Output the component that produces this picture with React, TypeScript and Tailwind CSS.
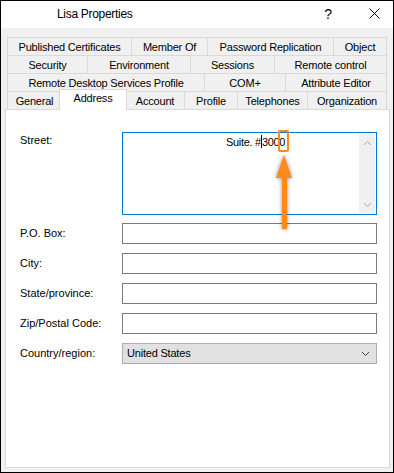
import React from 'react';

type Tab = { label: string; w: number; active?: boolean };

const rows: Tab[][] = [
  [
    { label: 'Published Certificates', w: 124 },
    { label: 'Member Of', w: 76 },
    { label: 'Password Replication', w: 126 },
    { label: 'Object', w: 54 },
  ],
  [
    { label: 'Security', w: 80 },
    { label: 'Environment', w: 103 },
    { label: 'Sessions', w: 84 },
    { label: 'Remote control', w: 113 },
  ],
  [
    { label: 'Remote Desktop Services Profile', w: 197 },
    { label: 'COM+', w: 81 },
    { label: 'Attribute Editor', w: 102 },
  ],
  [
    { label: 'General', w: 54 },
    { label: 'Address', w: 64, active: true },
    { label: 'Account', w: 59 },
    { label: 'Profile', w: 53 },
    { label: 'Telephones', w: 70 },
    { label: 'Organization', w: 80 },
  ],
];

function TabRow({ tabs }: { tabs: Tab[] }) {
  return (
    <div className="flex h-[18px] mx-[2px]">
      {tabs.map((t, i) =>
        t.active ? (
          <div
            key={t.label}
            style={{ width: t.w + 4 }}
            className="relative z-10 -mx-[2px] -mt-[2px] h-[21px] shrink-0 bg-white border-t border-x border-[#d9d9d9] flex justify-center pt-[1px] leading-[14px] tracking-[-0.2px]"
          >
            {t.label}
          </div>
        ) : (
          <div
            key={t.label}
            style={{ width: t.w }}
            className={`shrink-0 border-t border-l border-[#d9d9d9] flex items-center justify-center leading-[14px] tracking-[-0.2px] ${
              i === tabs.length - 1 ? 'border-r' : ''
            }`}
          >
            {t.label}
          </div>
        )
      )}
    </div>
  );
}

function Field({ label, children }: { label: string; children?: React.ReactNode }) {
  return (
    <div className="flex items-center">
      <div className="w-[102px] leading-[13px]">{label}</div>
      {children ?? <div className="w-[255px] h-[21px] border border-[#7a7a7a] bg-white" />}
    </div>
  );
}

function Chevron({ up }: { up?: boolean }) {
  return (
    <svg width="9" height="6" viewBox="0 0 9 6" className="text-[#a6a6a6]">
      <path
        d={up ? 'M1 5 L4.5 1.5 L8 5' : 'M1 1 L4.5 4.5 L8 1'}
        fill="none"
        stroke="currentColor"
        strokeWidth="1"
      />
    </svg>
  );
}

export default function App() {
  return (
    <div className="w-[394px] h-[473px] border border-black bg-[#f0f0f0] flex flex-col text-[11px] text-black font-['Liberation_Sans',Arial,sans-serif]">
      {/* Title bar */}
      <div className="h-[27px] bg-white flex items-center shrink-0">
        <span className="pl-[56px] text-[12px] tracking-[-0.3px] leading-[14px] mb-[1px]">Lisa Properties</span>
        <span className="ml-auto text-[14px] leading-[14px] mb-[2px]">?</span>
        <svg width="11" height="11" viewBox="0 0 11 11" className="ml-[37px] mr-[13px] mb-[2px]">
          <path d="M0.5 0.5 L10.5 10.5 M10.5 0.5 L0.5 10.5" stroke="#000" strokeWidth="1" />
        </svg>
      </div>

      <div className="flex-1 flex flex-col pt-[9px] pl-[4px] pr-[3px] pb-[4px]">
        {/* Tab rows */}
        {rows.map((r, i) => (
          <TabRow key={i} tabs={r} />
        ))}

        {/* Page */}
        <div className="flex-1 bg-white border border-[#d9d9d9] pt-[22px] pl-[14px] flex flex-col">
          <div className="flex">
            <div className="w-[102px] pt-[2px] leading-[13px]">Street:</div>
            <div className="relative w-[255px] h-[83px] border border-[#0078d7] bg-white flex">
              <div className="flex-1 pl-[103px] pt-[2px] leading-[14px] whitespace-pre tracking-[-0.3px]">
                Suite. #<span className="inline-block w-px h-[13px] bg-black align-[-2px]" />3000
              </div>
              <div className="w-[16px] my-[1px] mr-[1px] bg-[#f0f0f0] flex flex-col justify-between">
                <div className="h-[17px] flex items-center justify-center">
                  <Chevron up />
                </div>
                <div className="h-[17px] flex items-center justify-center">
                  <Chevron />
                </div>
              </div>

              {/* annotation */}
              <div className="absolute left-[155px] -top-[3px] w-[11px] h-[22px] border-2 border-[#ff8a1c] rounded-[2px]" />
              <svg
                width="35"
                height="85"
                viewBox="0 0 35 85"
                className="absolute left-[147px] top-[19px] drop-shadow-[0_0_2px_rgba(0,0,0,0.45)]"
              >
                <path d="M14 3 L6 26 L22 26 Z" fill="#ff8a1c" />
                <rect x="12" y="25" width="5" height="52" fill="#ff8a1c" />
              </svg>
            </div>
          </div>

          <div className="flex flex-col gap-[9px] mt-[8px]">
            <Field label="P.O. Box:" />
            <Field label="City:" />
            <Field label="State/province:" />
            <Field label="Zip/Postal Code:" />
            <Field label="Country/region:">
              <div className="w-[255px] h-[21px] border border-[#adadad] bg-[#e1e1e1] flex items-center pl-[4px] pr-[6px]">
                <span className="tracking-[-0.2px]">United States</span>
                <svg width="9" height="6" viewBox="0 0 9 6" className="ml-auto">
                  <path d="M1 1 L4.5 4.5 L8 1" fill="none" stroke="#444" strokeWidth="1" />
                </svg>
              </div>
            </Field>
          </div>
        </div>
      </div>
    </div>
  );
}
